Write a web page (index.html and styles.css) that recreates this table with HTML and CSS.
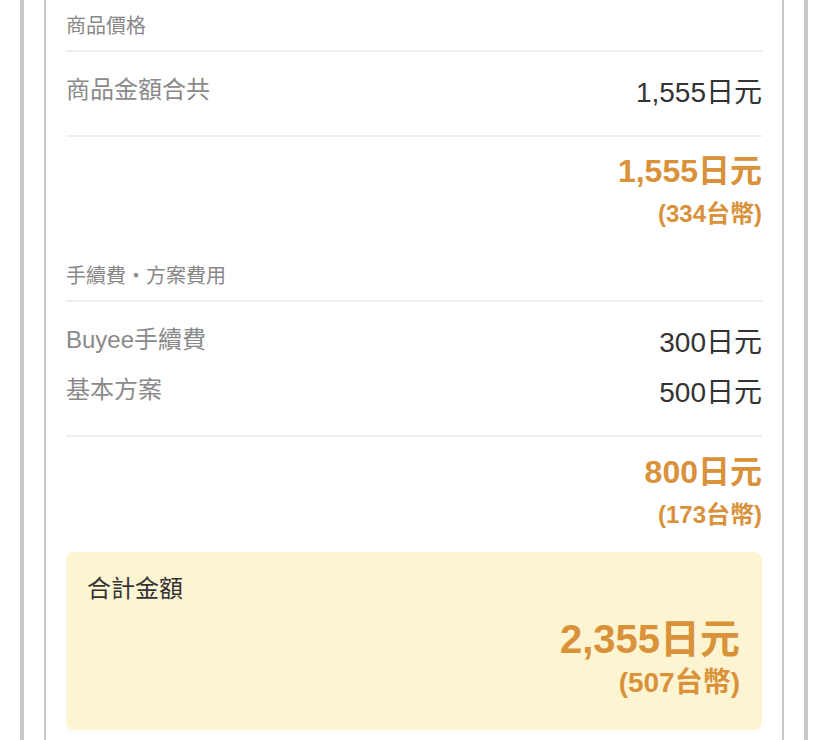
FILE: index.html
```html
<!DOCTYPE html>
<html lang="zh-Hant">
<head>
<meta charset="utf-8">
<title>商品價格</title>
<link rel="stylesheet" href="styles.css">
</head>
<body>
<div class="frame">
  <div class="panel">
    <section class="group">
      <h3 class="group-title">商品價格</h3>
      <div class="rows">
        <div class="row"><span class="label">商品金額合共</span><span class="value">1,555日元</span></div>
      </div>
      <div class="subtotal">
        <div class="sub-jpy">1,555日元</div>
        <div class="sub-twd">(334台幣)</div>
      </div>
    </section>
    <section class="group">
      <h3 class="group-title">手續費・方案費用</h3>
      <div class="rows">
        <div class="row"><span class="label">Buyee手續費</span><span class="value">300日元</span></div>
        <div class="row"><span class="label">基本方案</span><span class="value">500日元</span></div>
      </div>
      <div class="subtotal">
        <div class="sub-jpy">800日元</div>
        <div class="sub-twd">(173台幣)</div>
      </div>
    </section>
    <div class="total">
      <div class="total-title">合計金額</div>
      <div class="total-jpy">2,355日元</div>
      <div class="total-twd">(507台幣)</div>
    </div>
  </div>
</div>
</body>
</html>
```

FILE: styles.css
```css
html, body {
  margin: 0;
  padding: 0;
  background: #ffffff;
}
body {
  font-family: "Liberation Sans", "Noto Sans CJK TC", sans-serif;
  color: #333333;
}
.frame {
  margin-left: 20px;
  width: 780px;
  border-left: 4px solid #c8c8c8;
  border-right: 4px solid #c8c8c8;
}
.panel {
  margin: 0 20px;
  border-left: 2px solid #c8c8c8;
  border-right: 2px solid #c8c8c8;
  padding: 10px 20px 60px;
}
.group-title {
  margin: 0;
  font-size: 20px;
  line-height: 28px;
  font-weight: normal;
  color: #888888;
  padding-top: 2px;
  padding-bottom: 10px;
  border-bottom: 2px solid #eeeeee;
}
.rows {
  display: flex;
  flex-direction: column;
  gap: 8px;
  padding: 20px 0 21px;
  border-bottom: 2px solid #eeeeee;
}
.row {
  display: flex;
  justify-content: space-between;
  align-items: flex-start;
}
.label {
  font-size: 24px;
  line-height: 36px;
  color: #8a8a8a;
}
.value {
  font-size: 28px;
  line-height: 42px;
  color: #333333;
}
.subtotal {
  text-align: right;
  padding: 14px 0 31px;
  color: #d9913a;
  font-weight: bold;
}
.sub-jpy {
  font-size: 32px;
  line-height: 40px;
}
.sub-twd {
  margin-top: 8px;
  font-size: 24px;
  line-height: 30px;
}
.group + .group .subtotal {
  padding-top: 15px;
  padding-bottom: 22px;
}
.total {
  background: #fdf5d2;
  border-radius: 8px;
  padding: 19px 22px 29px 21px;
}
.total-title {
  font-size: 24px;
  line-height: 36px;
  color: #333333;
}
.total-jpy {
  margin-top: 8px;
  text-align: right;
  font-size: 40px;
  line-height: 48px;
  font-weight: bold;
  color: #d9913a;
}
.total-twd {
  margin-top: 2px;
  text-align: right;
  font-size: 28px;
  line-height: 36px;
  font-weight: bold;
  color: #d9913a;
}
```
